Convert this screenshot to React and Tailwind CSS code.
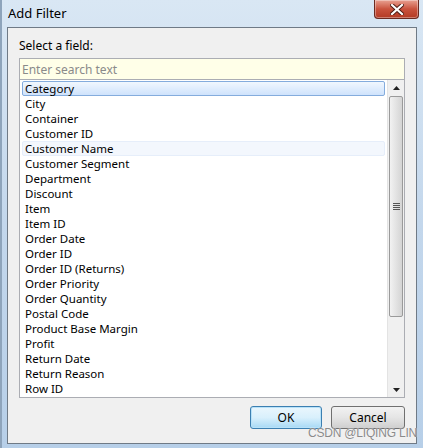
import React from 'react';

const FIELDS = [
  'Category', 'City', 'Container', 'Customer ID', 'Customer Name', 'Customer Segment',
  'Department', 'Discount', 'Item', 'Item ID', 'Order Date', 'Order ID',
  'Order ID (Returns)', 'Order Priority', 'Order Quantity', 'Postal Code',
  'Product Base Margin', 'Profit', 'Return Date', 'Return Reason', 'Row ID', 'Sales',
];

const font = { fontFamily: '"Noto Sans", "Open Sans", sans-serif' };

function CloseButton() {
  return (
    <div className="absolute left-[372px] top-0 w-[45px] h-[19px] rounded-b-[4px] border border-t-0 border-[#6b2a21] bg-gradient-to-b from-[#e8a192] via-[#c9523d] to-[#b33a24] flex items-center justify-center shadow-[inset_0_0_0_1px_rgba(255,255,255,0.35)]">
      <svg width="14" height="11" viewBox="0 0 14 11">
        <path d="M2 1 L12 10 M12 1 L2 10" stroke="#4a1a12" strokeWidth="4" strokeLinecap="square" />
        <path d="M2 1 L12 10 M12 1 L2 10" stroke="#ffffff" strokeWidth="2.2" strokeLinecap="square" />
      </svg>
    </div>
  );
}

function Scrollbar() {
  return (
    <div className="w-[17px] bg-[#f0f0f0] border-l border-[#e3e3e3] flex flex-col">
      <div className="h-[16px] flex items-center justify-center">
        <svg width="7" height="4" viewBox="0 0 7 4"><path d="M0 4 L3.5 0 L7 4Z" fill="#222" /></svg>
      </div>
      <div className="mx-[1px] h-[221px] rounded-[2px] border border-[#9a9a9a] bg-gradient-to-r from-[#f2f2f2] via-[#e3e3e3] to-[#d4d4d4] flex items-center justify-center">
        <div className="flex flex-col gap-[1px]">
          <div className="w-[7px] h-[1px] bg-[#555]" />
          <div className="w-[7px] h-[1px] bg-[#555]" />
          <div className="w-[7px] h-[1px] bg-[#555]" />
          <div className="w-[7px] h-[1px] bg-[#555]" />
        </div>
      </div>
      <div className="flex-1" />
      <div className="h-[15px] flex items-center justify-center">
        <svg width="7" height="4" viewBox="0 0 7 4"><path d="M0 0 L3.5 4 L7 0Z" fill="#222" /></svg>
      </div>
    </div>
  );
}

function Row({ label, i }) {
  const selected = i === 0;
  const hover = i === 4;
  let cls = 'h-[15px] leading-[13px] pl-[2px] text-[11.5px] text-black whitespace-nowrap rounded-[2px] border border-transparent';
  if (selected) cls += ' !border-[#84acdd] bg-gradient-to-b from-[#f1f7fe] to-[#cfe3fc]';
  if (hover) cls += ' !border-[#e6eefa] bg-[#f3f7fd]';
  return <div className={cls}>{label}</div>;
}

export default function App() {
  return (
    <div className="relative w-[423px] h-[448px] overflow-hidden bg-gradient-to-b from-[#d9e7f4] via-[#c3d7ec] to-[#b7cfe8] border-l-2 border-[#8ea4bb]" style={font}>
      <CloseButton />
      <div className="h-[27px] pl-[6px] pt-[4px] text-[13px] text-black leading-[18px]">Add Filter</div>
      <div className="ml-[5px] mr-[6px] h-[417px] bg-[#f0f0f0] border border-[#6f7a86] flex flex-col px-[11px]">
        <div className="pt-[10px] h-[30px] text-[12px] leading-[16px] text-black">Select a field:</div>
        <div className="border border-[#abadb3] bg-[#ffffe8]">
          <div className="h-[21px] leading-[21px] pl-[2px] text-[12px] text-[#8a8a8a] border-b border-[#abadb3]">Enter search text</div>
          <div className="h-[317px] flex bg-white">
            <div className="flex-1 overflow-hidden pl-[2px] pr-[2px] pt-[1px]">
              {FIELDS.map((f, i) => <Row key={f} label={f} i={i} />)}
            </div>
            <Scrollbar />
          </div>
        </div>
        <div className="flex justify-end gap-[9px] mt-[8px]">
          <div className="w-[72px] h-[23px] rounded-[3px] border border-[#3c7fb1] bg-gradient-to-b from-[#eaf6fd] via-[#d9f0fc] to-[#a7d9f5] shadow-[inset_0_0_0_1px_#b8e2f9] flex items-center justify-center text-[12px] text-black">OK</div>
          <div className="w-[74px] h-[23px] rounded-[3px] border border-[#707070] bg-gradient-to-b from-[#f2f2f2] via-[#e5e5e5] to-[#cfcfcf] flex items-center justify-center text-[12px] text-black">Cancel</div>
        </div>
      </div>
      <div className="absolute left-[306px] top-[425px] text-[12px] leading-[16px] text-[#8a8a8a] tracking-[-0.2px]" style={{ fontFamily: '"Liberation Sans", sans-serif', textShadow: '0 0 1px #fff' }}>CSDN @LIQING LIN</div>
    </div>
  );
}
